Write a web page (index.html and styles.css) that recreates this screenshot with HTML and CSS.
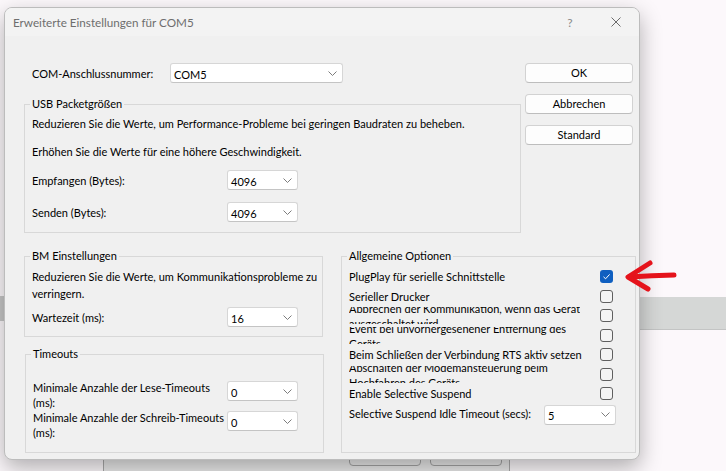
FILE: index.html
```html
<!DOCTYPE html>
<html lang="de">

<head>
    <meta charset="UTF-8" />
    <title>Erweiterte Einstellungen für COM5</title>
    <link rel="stylesheet" href="styles.css">
</head>

<body>
    <div class="desk">
        <!-- Fenster im Hintergrund -->
        <div class="bg-bar bg-bar-right"></div>
        <div class="bg-bar bg-bar-left"></div>
        <div class="bg-window">
            <div class="bg-btn bg-btn-1"></div>
            <div class="bg-btn bg-btn-2"></div>
        </div>

        <div class="dialog">
            <div class="titlebar">
                <span class="title">Erweiterte Einstellungen für COM5</span>
                <span class="tb-btn help">?</span>
                <span class="tb-btn close">
                    <svg width="10" height="10" viewBox="0 0 10 10">
                        <path d="M0.5 0.5 L9.5 9.5 M9.5 0.5 L0.5 9.5" stroke="#6b6b6b" stroke-width="1" fill="none" />
                    </svg>
                </span>
            </div>

            <div class="content">
                <div class="top">
                    <div class="top-left">
                        <div class="com-row">
                            <span class="com-label">COM-Anschlussnummer:</span>
                            <div class="combo combo-com">
                                <span>COM5</span>
                                <svg width="9" height="5" viewBox="0 0 9 5"><path d="M0.5 0.5 L4.5 4.5 L8.5 0.5" /></svg>
                            </div>
                        </div>

                        <fieldset class="group usb">
                            <legend>USB Packetgrößen</legend>
                            <p>Reduzieren Sie die Werte, um Performance-Probleme bei geringen Baudraten zu beheben.</p>
                            <p class="gap">Erhöhen Sie die Werte für eine höhere Geschwindigkeit.</p>
                            <div class="field-row first">
                                <span class="field-label">Empfangen (Bytes):</span>
                                <div class="combo combo-small">
                                    <span>4096</span>
                                    <svg width="9" height="5" viewBox="0 0 9 5"><path d="M0.5 0.5 L4.5 4.5 L8.5 0.5" /></svg>
                                </div>
                            </div>
                            <div class="field-row second">
                                <span class="field-label">Senden (Bytes):</span>
                                <div class="combo combo-small">
                                    <span>4096</span>
                                    <svg width="9" height="5" viewBox="0 0 9 5"><path d="M0.5 0.5 L4.5 4.5 L8.5 0.5" /></svg>
                                </div>
                            </div>
                        </fieldset>
                    </div>

                    <div class="buttons">
                        <div class="btn">OK</div>
                        <div class="btn">Abbrechen</div>
                        <div class="btn">Standard</div>
                    </div>
                </div>

                <div class="bottom">
                    <div class="bottom-left">
                        <fieldset class="group bm">
                            <legend>BM Einstellungen</legend>
                            <p class="two-lines">Reduzieren Sie die Werte, um Kommunikationsprobleme zu<br>verringern.</p>
                            <div class="field-row wait">
                                <span class="field-label">Wartezeit (ms):</span>
                                <div class="combo combo-small">
                                    <span>16</span>
                                    <svg width="9" height="5" viewBox="0 0 9 5"><path d="M0.5 0.5 L4.5 4.5 L8.5 0.5" /></svg>
                                </div>
                            </div>
                        </fieldset>

                        <fieldset class="group timeouts">
                            <legend>Timeouts</legend>
                            <div class="to-row">
                                <span class="to-label">Minimale Anzahle der Lese-Timeouts<br>(ms):</span>
                                <div class="combo combo-small">
                                    <span>0</span>
                                    <svg width="9" height="5" viewBox="0 0 9 5"><path d="M0.5 0.5 L4.5 4.5 L8.5 0.5" /></svg>
                                </div>
                            </div>
                            <div class="to-row">
                                <span class="to-label">Minimale Anzahle der Schreib-Timeouts<br>(ms):</span>
                                <div class="combo combo-small">
                                    <span>0</span>
                                    <svg width="9" height="5" viewBox="0 0 9 5"><path d="M0.5 0.5 L4.5 4.5 L8.5 0.5" /></svg>
                                </div>
                            </div>
                        </fieldset>
                    </div>

                    <fieldset class="group options">
                        <legend>Allgemeine Optionen</legend>
                        <div class="opt-row">
                            <span class="opt-label">PlugPlay für serielle Schnittstelle</span>
                            <span class="check checked">
                                <svg width="13" height="13" viewBox="0 0 13 13"><path d="M3.5 6.8 L5.6 8.8 L9.6 4.4" /></svg>
                            </span>
                        </div>
                        <div class="opt-row">
                            <span class="opt-label">Serieller Drucker</span>
                            <span class="check"></span>
                        </div>
                        <div class="opt-row">
                            <span class="opt-label clip"><span>Abbrechen der Kommunikation, wenn das Gerät<br>ausgeschaltet wird</span></span>
                            <span class="check"></span>
                        </div>
                        <div class="opt-row">
                            <span class="opt-label clip"><span>Event bei unvorhergesehener Entfernung des<br>Geräts</span></span>
                            <span class="check"></span>
                        </div>
                        <div class="opt-row">
                            <span class="opt-label">Beim Schließen der Verbindung RTS aktiv setzen</span>
                            <span class="check"></span>
                        </div>
                        <div class="opt-row">
                            <span class="opt-label clip"><span>Abschalten der Modemansteuerung beim<br>Hochfahren des Geräts</span></span>
                            <span class="check"></span>
                        </div>
                        <div class="opt-row">
                            <span class="opt-label">Enable Selective Suspend</span>
                            <span class="check"></span>
                        </div>
                        <div class="opt-row idle">
                            <span class="opt-label">Selective Suspend Idle Timeout (secs):</span>
                            <div class="combo combo-small combo-idle">
                                <span>5</span>
                                <svg width="9" height="5" viewBox="0 0 9 5"><path d="M0.5 0.5 L4.5 4.5 L8.5 0.5" /></svg>
                            </div>
                        </div>
                    </fieldset>
                </div>
            </div>
        </div>

        <!-- roter Pfeil -->
        <svg class="arrow" width="64" height="44" viewBox="0 0 64 44">
            <path d="M54 20 Q32 20.5 9 22" />
            <path d="M30 8 L8 22 L28 34" />
        </svg>
    </div>
</body>

</html>
```

FILE: styles.css
```css
body {
    margin: 0;
    padding: 0;
    background-color: #fcf8fb;
    font-family: Lato, "Open Sans", sans-serif;
    font-size: 11px;
    color: #000;
}

.desk {
    position: relative;
    width: 726px;
    height: 471px;
    overflow: hidden;
}

/* Hintergrund */
.bg-bar {
    position: absolute;
    background-color: #d5d7d6;
}

.bg-bar-right {
    left: 600px;
    top: 297px;
    width: 126px;
    height: 32px;
    border-bottom: 1px solid #c3c4c4;
}

.bg-bar-left {
    left: 0;
    top: 296px;
    width: 20px;
    height: 25px;
    background-color: #c7c7c7;
}

.bg-window {
    position: absolute;
    left: 103px;
    top: 400px;
    width: 405px;
    height: 100px;
    border: 1px solid #a9a9a9;
    border-radius: 6px;
    background-color: #e9e9e9;
}

.bg-btn {
    position: absolute;
    top: 40px;
    width: 70px;
    height: 23px;
    border: 1px solid #a3a3a3;
    border-radius: 4px;
}

.bg-btn-1 {
    left: 245px;
}

.bg-btn-2 {
    left: 326px;
}

/* Dialog */
.dialog {
    position: absolute;
    left: 4px;
    top: 7px;
    width: 634px;
    height: 451px;
    border: 1px solid #bcbcbc;
    border-radius: 8px;
    background-color: #f0f0f0;
    box-shadow: 0 8px 22px rgba(0, 0, 0, 0.3);
    overflow: hidden;
}

.titlebar {
    display: flex;
    align-items: center;
    height: 28px;
    padding-left: 8px;
    background-color: #f3f3f3;
    color: #6e6e6e;
    font-size: 11.7px;
}

.title {
    flex: 1;
}

.tb-btn {
    width: 46px;
    height: 28px;
    display: flex;
    align-items: center;
    justify-content: center;
}

.help {
    color: #8a8a8a;
    font-size: 12px;
}

.content {
    padding-left: 19px;
    white-space: nowrap;
}

.top {
    display: flex;
}

.top-left {
    width: 497px;
    padding-top: 27px;
}

.com-row {
    display: flex;
    align-items: center;
    height: 20px;
    padding-left: 8px;
}

.com-label {
    width: 138px;
}

/* Auswahlfelder */
.combo {
    box-sizing: border-box;
    display: flex;
    align-items: center;
    justify-content: space-between;
    height: 20px;
    padding: 0 5px 0 3px;
    background-color: #fff;
    border: 1px solid #d6d6d6;
    border-bottom-color: #c4c4c4;
    border-radius: 3px;
}

.combo span {
    padding-top: 2px;
}

.combo svg path {
    fill: none;
    stroke: #7c7c7c;
    stroke-width: 1;
}

.combo-com {
    width: 173px;
}

.combo-small {
    width: 71px;
}

/* Gruppen */
.group {
    margin: 0;
    border: 1px solid #d8d8d8;
    padding: 4px 7px 10px 7px;
    min-width: 0;
    box-sizing: border-box;
}

.group legend {
    padding: 0 2px;
    margin-left: -2px;
    line-height: 16px;
}

.group p {
    margin: 0;
    line-height: 16px;
}

.usb {
    margin-top: 13px;
    width: 497px;
}

.usb .gap {
    margin-top: 12px;
}

.field-row {
    display: flex;
    align-items: center;
    height: 20px;
}

.field-label {
    width: 195px;
}

.usb .first {
    margin-top: 10px;
}

.usb .second {
    margin-top: 12px;
}

.buttons {
    display: flex;
    flex-direction: column;
    gap: 11px;
    margin-left: 4px;
    padding-top: 27px;
}

.btn {
    box-sizing: border-box;
    width: 108px;
    height: 20px;
    line-height: 18px;
    text-align: center;
    background-color: #fdfdfd;
    border: 1px solid #d2d2d2;
    border-bottom-color: #bdbdbd;
    border-radius: 4px;
}

.bottom {
    display: flex;
    margin-top: 15px;
}

.bottom-left {
    width: 300px;
}

.bm {
    width: 299px;
    padding-bottom: 9px;
}

.bm .two-lines {
    line-height: 17px;
}

.bm .wait {
    margin-top: 5px;
}

.timeouts {
    width: 299px;
    margin-top: 9px;
    margin-left: 1px;
    padding: 18px 7px 12px 7px;
}

.to-row {
    display: flex;
    align-items: flex-start;
    height: 30px;
}

.to-label {
    width: 194px;
    line-height: 15px;
}

.to-row .combo {
    margin-top: 1px;
}

.options {
    width: 295px;
    margin-left: 17px;
    padding: 3px 22px 0 7px;
}

.opt-row {
    display: flex;
    align-items: center;
    justify-content: space-between;
    height: 19.5px;
}

.opt-label {
    line-height: 15px;
}

.opt-label.clip {
    height: 17px;
    overflow: hidden;
}

.opt-label.clip span {
    display: block;
    margin-top: -6px;
}

.check {
    box-sizing: border-box;
    width: 13px;
    height: 13px;
    border: 1px solid #5f5f5f;
    border-radius: 3px;
    background-color: #f4f4f4;
}

.check.checked {
    border: none;
    background-color: #0f5fc0;
}

.check svg {
    display: block;
}

.check svg path {
    fill: none;
    stroke: #fff;
    stroke-width: 1;
}

.idle .combo-idle {
    width: 72px;
    margin-right: -3px;
    margin-top: 3px;
}

/* Pfeil */
.arrow {
    position: absolute;
    left: 620px;
    top: 255px;
}

.arrow path {
    fill: none;
    stroke: #e5131b;
    stroke-width: 5;
    stroke-linecap: round;
    stroke-linejoin: round;
}
```
